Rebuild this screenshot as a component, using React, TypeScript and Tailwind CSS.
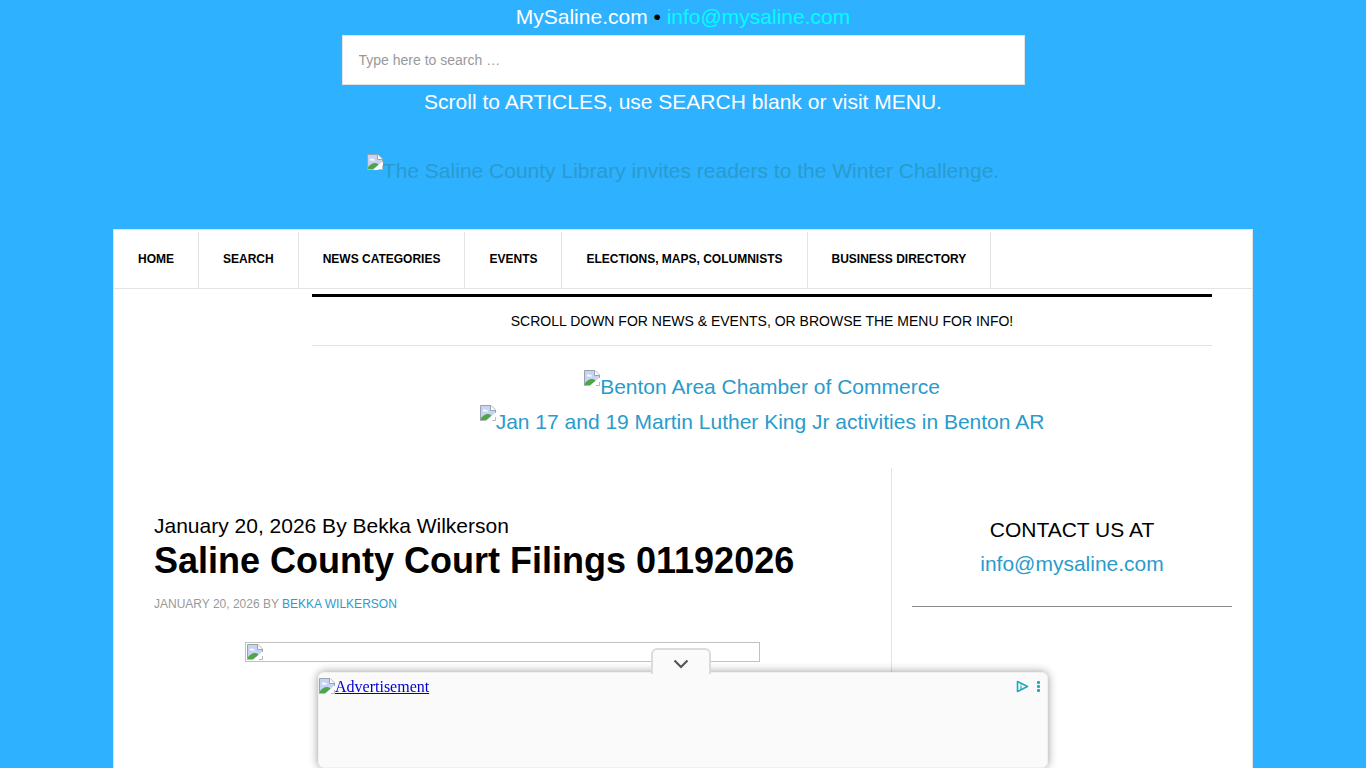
import React from "react";

function MissingImage() {
  return (
    <svg width="16" height="16" viewBox="0 0 16 16" className="block shrink-0" aria-hidden="true">
      <path d="M0.5 0.5H11L15.5 5V15.5H0.5Z" fill="#fff" />
      <path d="M1 1H10.5V5.5H15V8L7 15H1Z" fill="#c6d3f4" />
      <path d="M3 6.5a1.6 1.6 0 0 1 3 -1.2a1.3 1.3 0 0 1 2 1.2Z" fill="#fff" />
      <path d="M1 15V13C4 9.5 6.5 8.5 8.5 9C10 9.4 11 10 11.5 10.8L6.5 15Z" fill="#4ea744" />
      <path d="M0.5 16V0.5H11L15.5 5V8" fill="none" stroke="#9aa2aa" />
      <path d="M10.5 0.5V5.5H15.5" fill="#fff" stroke="#9aa2aa" />
      <path d="M0.5 15.5H6.5M12 15.5H15.5V12" fill="none" stroke="#b4bac0" />
      <path d="M6 16L16 7.5V11L10.5 16Z" fill="#fff" />
    </svg>
  );
}

function ImageLink({ alt }: { alt: string }) {
  return (
    <a href="#" className="flex items-start justify-center text-[#2a9bcb]">
      <MissingImage />
      <span>{alt}</span>
    </a>
  );
}

const menu = [
  "Home",
  "Search",
  "News Categories",
  "Events",
  "Elections, Maps, Columnists",
  "Business Directory",
];

export default function App() {
  return (
    <div className="flex min-h-screen flex-col bg-[#2eb1ff] font-['Liberation_Sans',Arial,sans-serif] text-[21px] leading-[34px] text-black">
      <header className="text-center">
        <p className="text-white">
          MySaline.com <span className="text-black">•</span>{" "}
          <a href="mailto:info@mysaline.com" className="text-[#00ffff]">
            info@mysaline.com
          </a>
        </p>
        <form role="search" className="mx-auto mt-px w-1/2">
          <input
            type="search"
            aria-label="Search"
            placeholder="Type here to search …"
            className="block h-[50px] w-full border border-[#e3e3e3] bg-white px-4 text-sm placeholder:text-[#999999]"
          />
        </form>
        <p className="text-white">Scroll to ARTICLES, use SEARCH blank or visit MENU.</p>
        <div className="pt-[35px] pb-[41px]">
          <ImageLink alt="The Saline County Library invites readers to the Winter Challenge." />
        </div>
      </header>

      <div className="mx-auto flex w-full max-w-[1140px] flex-1 flex-col border border-b-0 border-[#e3e3e3] bg-white">
        <nav className="border-b border-[#e3e3e3] pt-0.5">
          <ul className="flex flex-wrap">
            {menu.map((item) => (
              <li key={item} className="border-r border-[#e3e3e3]">
                <a href="#" className="block px-6 pt-[18px] pb-5 text-xs leading-[18px] font-bold uppercase">
                  {item}
                </a>
              </li>
            ))}
          </ul>
        </nav>

        <section className="mt-[5px] mr-10 ml-auto w-full max-w-[900px] text-center">
          <h4 className="border-t-3 border-b border-t-black border-b-[#e3e3e3] py-3 text-sm leading-6 uppercase">
            Scroll down for news &amp; events, or browse the menu for info!
          </h4>
          <div className="flex flex-col gap-px pt-6 pb-[29px]">
            <ImageLink alt="Benton Area Chamber of Commerce" />
            <ImageLink alt="Jan 17 and 19 Martin Luther King Jr activities in Benton AR" />
          </div>
        </section>

        <div className="flex flex-1">
          <main className="flex-1 px-10 pt-[41px]">
            <article>
              <p>January 20, 2026 By Bekka Wilkerson</p>
              <h1 className="text-4xl leading-[36px] font-bold">Saline County Court Filings 01192026</h1>
              <p className="mt-3 text-xs leading-[26px] text-[#999999] uppercase">
                January 20, 2026 By{" "}
                <a href="#" className="text-[#2a9bcb]">
                  Bekka Wilkerson
                </a>
              </p>
              <div className="mx-auto mt-[25px] h-5 w-full max-w-[515px] border border-[#c0c0c0] p-px">
                <MissingImage />
              </div>
            </article>
          </main>
          <aside className="w-[361px] border-l border-[#e3e3e3] px-5 pt-[45px] text-center">
            <p>CONTACT US AT</p>
            <a href="mailto:info@mysaline.com" className="text-[#2a9bcb]">
              info@mysaline.com
            </a>
            <hr className="mt-[25px] border-[#888888]" />
          </aside>
        </div>
      </div>

      <div className="fixed inset-x-0 bottom-0 mx-auto h-24 w-full max-w-[730px] rounded-md border border-[#f0f0f0] bg-[#fafafa] shadow-[0_0_10px_rgba(0,0,0,0.4)]">
        <button
          type="button"
          aria-label="Hide advertisement"
          className="absolute -top-[25px] left-[332px] flex h-[26px] w-[60px] items-center justify-center rounded-t-md border-2 border-b-0 border-[#dcdcdc] bg-[#fafafa]"
        >
          <svg width="16" height="10" viewBox="0 0 16 10" className="mt-1" aria-hidden="true">
            <path d="M1.5 1.5L8 8L14.5 1.5" fill="none" stroke="#555" strokeWidth="2.2" />
          </svg>
        </button>
        <div className="flex items-start justify-between pt-[5px] pr-[5px]">
          <a
            href="#"
            className="flex items-start font-['Liberation_Serif',serif] text-base leading-[18px] text-[#0000cc] underline"
          >
            <MissingImage />
            <span>Advertisement</span>
          </a>
          <div className="flex items-center gap-1.5 pt-0.5">
            <svg width="13" height="13" viewBox="0 0 13 13" aria-hidden="true">
              <path d="M1.5 1.5L11.5 6.5L1.5 11.5Z" fill="none" stroke="#1fa9bb" strokeWidth="1.6" strokeLinejoin="round" />
              <path d="M5 5.5V9.5M5 3.5V4.5" stroke="#1fa9bb" strokeWidth="1.2" />
            </svg>
            <svg width="7" height="13" viewBox="0 0 7 13" fill="#1fa9bb" aria-hidden="true">
              <rect x="2" y="1" width="3" height="3" rx="1" />
              <rect x="2" y="5" width="3" height="3" rx="1" />
              <rect x="2" y="9" width="3" height="3" rx="1" />
            </svg>
          </div>
        </div>
      </div>
    </div>
  );
}
